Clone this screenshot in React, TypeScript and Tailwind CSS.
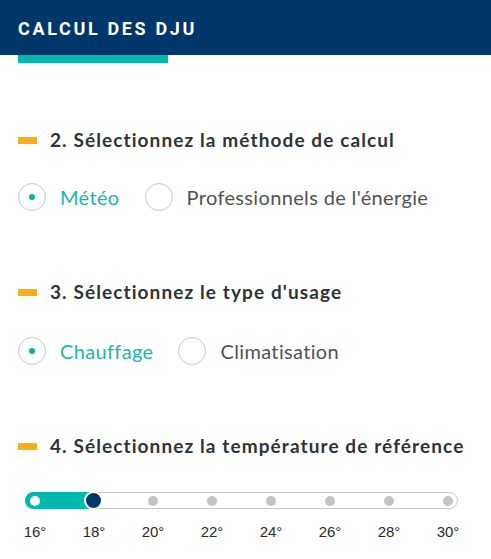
import React from "react";

const temps = [16, 18, 20, 22, 24, 26, 28, 30];

function Heading({ children }: { children: React.ReactNode }) {
  return (
    <div className="flex items-center h-[24px] pl-[18px]">
      <span className="block w-[19px] h-[7px] bg-[#f9ad17]" />
      <span className="ml-[13px] text-[19px] tracking-[1.1px] font-bold text-[#2e3338] leading-[24px] font-['Lato',sans-serif]">
        {children}
      </span>
    </div>
  );
}

function Radio({ label, checked }: { label: string; checked?: boolean }) {
  return (
    <div className="flex items-center">
      <span className="flex items-center justify-center w-[28px] h-[28px] rounded-full border border-[#c8c8c8] bg-white">
        {checked && <span className="block w-[6px] h-[6px] rounded-full bg-[#00b5a6]" />}
      </span>
      <span
        className={
          "ml-[14px] text-[20px] tracking-[0.35px] leading-[28px] font-['Lato',sans-serif] " +
          (checked ? "text-[#1db6a8]" : "text-[#505356]")
        }
      >
        {label}
      </span>
    </div>
  );
}

export default function App() {
  return (
    <div className="w-[491px] h-[559px] bg-white overflow-hidden">
      <div className="h-[55px] bg-[#00376a] pl-[18px] flex items-center">
        <span className="text-white font-bold text-[18px] tracking-[2.65px] font-['Roboto',sans-serif] mt-[2px]">
          CALCUL DES DJU
        </span>
      </div>
      <div className="ml-[18px] w-[150px] h-[8px] bg-[#00b8ad]" />

      <div className="mt-[65px]">
        <Heading>2. Sélectionnez la méthode de calcul</Heading>
      </div>
      <div className="mt-[31px] pl-[18px] flex items-center gap-[25px]">
        <Radio label="Météo" checked />
        <Radio label="Professionnels de l'énergie" />
      </div>

      <div className="mt-[69px]">
        <Heading>3. Sélectionnez le type d'usage</Heading>
      </div>
      <div className="mt-[33px] pl-[18px] flex items-center gap-[25px]">
        <Radio label="Chauffage" checked />
        <Radio label="Climatisation" />
      </div>

      <div className="mt-[69px]">
        <Heading>4. Sélectionnez la température de référence</Heading>
      </div>

      <div className="mt-[34px] ml-[25px] w-[433px] h-[17px] relative rounded-full border border-[#c9c9c9] flex items-center justify-between px-[4px]">
        <div className="absolute left-[-1px] top-[-1px] h-[17px] w-[70px] rounded-l-full bg-[#00b8ad]" />
        {temps.map((t, i) => (
          <span
            key={t}
            className={
              "relative block w-[10px] h-[10px] rounded-full " +
              (i === 0 ? "bg-white" : "bg-[#c4c4c4]")
            }
          />
        ))}
        <span className="absolute left-[58px] top-[-2px] w-[19px] h-[19px] rounded-full bg-[#00376a] border-[2px] border-white box-border" />
      </div>

      <div className="mt-[13px] ml-[15px] w-[453px] flex justify-between">
        {temps.map((t) => (
          <span
            key={t}
            className="w-[40px] text-center text-[15px] leading-[20px] text-[#2b2b2b] font-['Liberation_Sans',Arial,sans-serif]"
          >
            {t}°
          </span>
        ))}
      </div>
    </div>
  );
}
